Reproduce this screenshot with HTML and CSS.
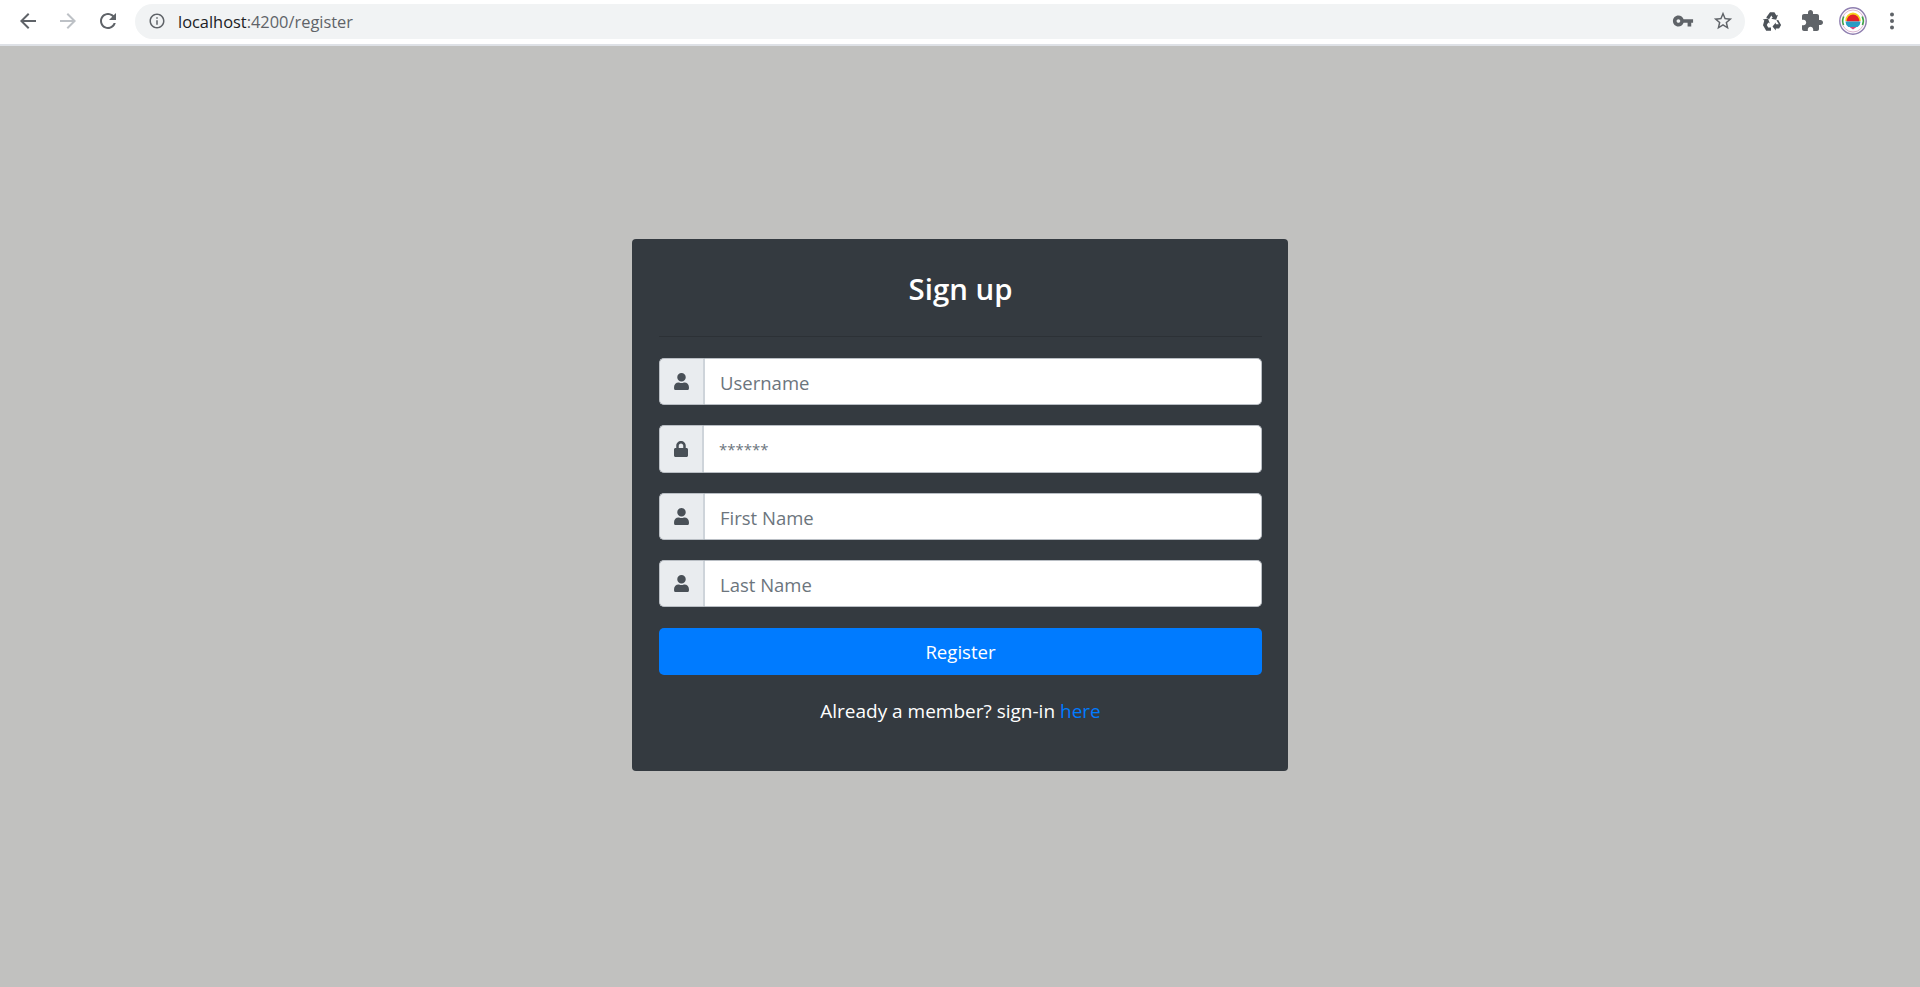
FILE: index.html
```html
<!DOCTYPE html>
<html lang="en">
<head>
    <meta charset="UTF-8">
    <meta name="viewport" content="width=device-width, initial-scale=1.0">
    <title>Register</title>
    <link rel="stylesheet" href="styles.css">
</head>
<body>

    <!-- browser toolbar -->
    <div class="toolbar">
        <svg class="tool-icon" viewBox="0 0 24 24"><path d="M20 11H7.83l5.59-5.59L12 4l-8 8 8 8 1.41-1.41L7.83 13H20v-2z"/></svg>
        <svg class="tool-icon tool-disabled" viewBox="0 0 24 24"><path d="M4 11h12.17l-5.59-5.59L12 4l8 8-8 8-1.41-1.41L16.17 13H4v-2z"/></svg>
        <svg class="tool-icon" viewBox="0 0 24 24"><path d="M17.65 6.35C16.2 4.9 14.21 4 12 4c-4.42 0-7.99 3.58-7.99 8s3.57 8 7.99 8c3.73 0 6.84-2.55 7.73-6h-2.08c-.82 2.33-3.04 4-5.65 4-3.31 0-6-2.69-6-6s2.69-6 6-6c1.66 0 3.14.69 4.22 1.78L13 11h7V4l-2.35 2.35z"/></svg>
        <div class="omnibox">
            <svg class="info-icon" viewBox="0 0 24 24"><path d="M11 7h2v2h-2zm0 4h2v6h-2zm1-9C6.48 2 2 6.48 2 12s4.48 10 10 10 10-4.48 10-10S17.52 2 12 2zm0 18c-4.41 0-8-3.59-8-8s3.59-8 8-8 8 3.59 8 8-3.59 8-8 8z"/></svg>
            <div class="url"><span class="url-host">localhost</span>:4200/register</div>
            <svg class="omni-icon" viewBox="0 0 24 24"><path d="M12.65 10C11.83 7.67 9.61 6 7 6c-3.31 0-6 2.69-6 6s2.69 6 6 6c2.61 0 4.83-1.67 5.65-4H17v4h4v-4h2v-4H12.65zM7 14c-1.1 0-2-.9-2-2s.9-2 2-2 2 .9 2 2-.9 2-2 2z"/></svg>
            <svg class="omni-icon" viewBox="0 0 24 24"><path d="M22 9.24l-7.19-.62L12 2 9.19 8.63 2 9.24l5.46 4.73L5.82 21 12 17.27 18.18 21l-1.63-7.03L22 9.24zM12 15.4l-3.76 2.27 1-4.28-3.32-2.88 4.38-.38L12 6.1l1.71 4.04 4.38.38-3.32 2.88 1 4.28L12 15.4z"/></svg>
        </div>
        <svg class="tool-icon recycle" viewBox="0 0 24 24"><path d="M10 3.2h4.4l2 3.4 1.5-.9-1.7 5-5-1 1.5-.9-1.4-2.4-2.2 3.8-2.9-1.7z"/><path d="M18.2 11l2.9 5-2 3.5h-3.3v1.9l-3.3-4 3.3-4v1.9h3l-2.4-4.1z"/><path d="M4.3 11.4l-1.5-.9 5.2-.9 1.8 4.9-1.5-.9-1.5 2.5 1.4 2.5h2.8v3.2H6.2l-3.2-5.5z"/></svg>
        <svg class="tool-icon" viewBox="0 0 24 24"><path d="M20.5 11H19V7c0-1.1-.9-2-2-2h-4V3.5C13 2.12 11.88 1 10.5 1S8 2.12 8 3.5V5H4c-1.1 0-1.99.9-1.99 2v3.8H3.5c1.49 0 2.7 1.21 2.7 2.7s-1.21 2.7-2.7 2.7H2V20c0 1.1.9 2 2 2h3.8v-1.5c0-1.49 1.21-2.7 2.7-2.7 1.49 0 2.7 1.21 2.7 2.7V22H17c1.1 0 2-.9 2-2v-4h1.5c1.38 0 2.5-1.12 2.5-2.5S21.88 11 20.5 11z"/></svg>
        <svg class="avatar" viewBox="0 0 28 28">
            <circle cx="14" cy="14" r="13.2" fill="#fff" stroke="#8f7fb0" stroke-width="1.4"/>
            <circle cx="14" cy="14" r="11" fill="#fff" stroke="#dcb4d0" stroke-width="1"/>
            <path d="M4.8 9.5A10 10 0 0 0 4.6 18" fill="none" stroke="#39a845" stroke-width="1.5"/>
            <path d="M23.2 9.5A10 10 0 0 1 23.4 18" fill="none" stroke="#39a845" stroke-width="1.5"/>
            <path d="M6.2 14a7.8 8.6 0 0 1 15.6 0z" fill="#f6d21f"/>
            <path d="M7.6 14.5a6.4 7 0 0 1 12.8 0z" fill="#e3202a"/>
            <path d="M6.4 14.5h15.2a7.6 7.6 0 0 1-3 5.6H9.4a7.6 7.6 0 0 1-3-5.6z" fill="#2b9cc4"/>
            <path d="M10.5 20h7L14 22.6z" fill="#d9447a"/>
        </svg>
        <svg class="tool-icon" viewBox="0 0 24 24"><circle cx="12" cy="5.5" r="2"/><circle cx="12" cy="12" r="2"/><circle cx="12" cy="18.5" r="2"/></svg>
    </div>

    <div class="page">
        <div class="card">
            <h1>Sign up</h1>
            <hr class="divider">

            <div class="input-row">
                <span class="addon">
                    <svg class="addon-icon" viewBox="0 0 448 512"><path d="M224 256c70.7 0 128-57.3 128-128S294.7 0 224 0 96 57.3 96 128s57.3 128 128 128zm89.6 32h-16.7c-22.2 10.2-46.9 16-72.9 16s-50.6-5.8-72.9-16h-16.7C60.2 288 0 348.2 0 422.4V464c0 26.5 21.5 48 48 48h352c26.5 0 48-21.5 48-48v-41.6c0-74.2-60.2-134.4-134.4-134.4z"/></svg>
                </span>
                <input class="field" type="text" placeholder="Username">
            </div>
            <div class="input-row">
                <span class="addon addon-lock">
                    <svg class="addon-icon lock-icon" viewBox="0 0 448 512"><path d="M400 224h-24v-72C376 68.2 307.8 0 224 0S72 68.2 72 152v72H48c-26.5 0-48 21.5-48 48v192c0 26.5 21.5 48 48 48h352c26.5 0 48-21.5 48-48V272c0-26.5-21.5-48-48-48zm-104 0H152v-72c0-39.7 32.3-72 72-72s72 32.3 72 72v72z"/></svg>
                </span>
                <input class="field field-password" type="text" placeholder="******">
            </div>
            <div class="input-row">
                <span class="addon">
                    <svg class="addon-icon" viewBox="0 0 448 512"><path d="M224 256c70.7 0 128-57.3 128-128S294.7 0 224 0 96 57.3 96 128s57.3 128 128 128zm89.6 32h-16.7c-22.2 10.2-46.9 16-72.9 16s-50.6-5.8-72.9-16h-16.7C60.2 288 0 348.2 0 422.4V464c0 26.5 21.5 48 48 48h352c26.5 0 48-21.5 48-48v-41.6c0-74.2-60.2-134.4-134.4-134.4z"/></svg>
                </span>
                <input class="field" type="text" placeholder="First Name">
            </div>
            <div class="input-row">
                <span class="addon">
                    <svg class="addon-icon" viewBox="0 0 448 512"><path d="M224 256c70.7 0 128-57.3 128-128S294.7 0 224 0 96 57.3 96 128s57.3 128 128 128zm89.6 32h-16.7c-22.2 10.2-46.9 16-72.9 16s-50.6-5.8-72.9-16h-16.7C60.2 288 0 348.2 0 422.4V464c0 26.5 21.5 48 48 48h352c26.5 0 48-21.5 48-48v-41.6c0-74.2-60.2-134.4-134.4-134.4z"/></svg>
                </span>
                <input class="field" type="text" placeholder="Last Name">
            </div>

            <button class="register-btn">Register</button>
            <p class="signin-text">Already a member? sign-in <a href="#">here</a></p>
        </div>
    </div>

</body>
</html>
```

FILE: styles.css
```css
* {
    box-sizing: border-box;
}
body {
    margin: 0;
    height: 987px;
    overflow: hidden;
    background-color: #c1c1bf;
    font-family: "Open Sans", "Noto Sans", Arial, sans-serif;
}

/* browser toolbar */
.toolbar {
    display: flex;
    align-items: center;
    gap: 16px;
    height: 46px;
    padding: 0 16px 2px 16px;
    background-color: #fff;
    border-bottom: 2px solid #dee1e6;
}
.tool-icon {
    width: 24px;
    height: 24px;
    flex: none;
    fill: #5f6368;
}
.tool-disabled {
    fill: #bdc1c6;
}
.recycle {
    fill: #4d5359;
}
.avatar {
    width: 28px;
    height: 28px;
    flex: none;
    margin: 0 -3px 0 -1px;
}
.omnibox {
    flex: 1;
    display: flex;
    align-items: center;
    height: 35px;
    margin: 0 -1px;
    padding: 0 11px 0 13px;
    background-color: #f1f3f4;
    border-radius: 18px;
}
.info-icon {
    width: 18px;
    height: 18px;
    fill: #5f6368;
}
.url {
    flex: 1;
    margin-left: 12px;
    font-size: 16.4px;
    color: #5f6368;
}
.url-host {
    color: #202124;
}
.omni-icon {
    width: 22px;
    height: 22px;
    margin-left: 18px;
    fill: #5f6368;
}

/* register card */
.page {
    display: flex;
    justify-content: center;
    padding-top: 193px;
}
.card {
    width: 656px;
    height: 532px;
    padding: 27px 26px 0 27px;
    background-color: #343a40;
    border-radius: 4px;
    color: #fff;
}
h1 {
    margin: 0;
    text-align: center;
    font-size: 29.4px;
    line-height: 47px;
    font-weight: 600;
}
.divider {
    margin: 23px 0 21px;
    border: none;
    border-top: 1px solid #2c3136;
}
.input-row {
    display: flex;
    height: 47.3px;
    margin-bottom: 20px;
}
.addon {
    display: flex;
    align-items: center;
    justify-content: center;
    width: 46px;
    background-color: #e9ecef;
    border: 1px solid #b9bec4;
    border-right: 2px solid #ced4da;
    border-radius: 5px 0 0 5px;
}
.addon-lock {
    width: 45px;
}
.addon-icon {
    width: 15px;
    height: 17px;
    fill: #495057;
}
.lock-icon {
    width: 14px;
    height: 16px;
}
.field {
    flex: 1;
    min-width: 0;
    padding: 2px 15px 0;
    border: 1px solid #b9bec4;
    border-left: none;
    border-radius: 0 5px 5px 0;
    background-color: #fff;
    font-family: inherit;
    font-size: 18.5px;
    color: #495057;
}
.field::placeholder {
    color: #6c757d;
    opacity: 1;
}
.field-password {
    padding: 0 15px;
    font-size: 15px;
}
.register-btn {
    display: block;
    width: 100%;
    height: 47px;
    margin-top: 21px;
    border: none;
    border-radius: 5px;
    background-color: #007bff;
    color: #fff;
    font-family: inherit;
    font-size: 18.6px;
    cursor: pointer;
}
.signin-text {
    margin: 22px 0 0;
    text-align: center;
    font-size: 19px;
    line-height: 28px;
}
.signin-text a {
    color: #007bff;
    text-decoration: none;
}
```
